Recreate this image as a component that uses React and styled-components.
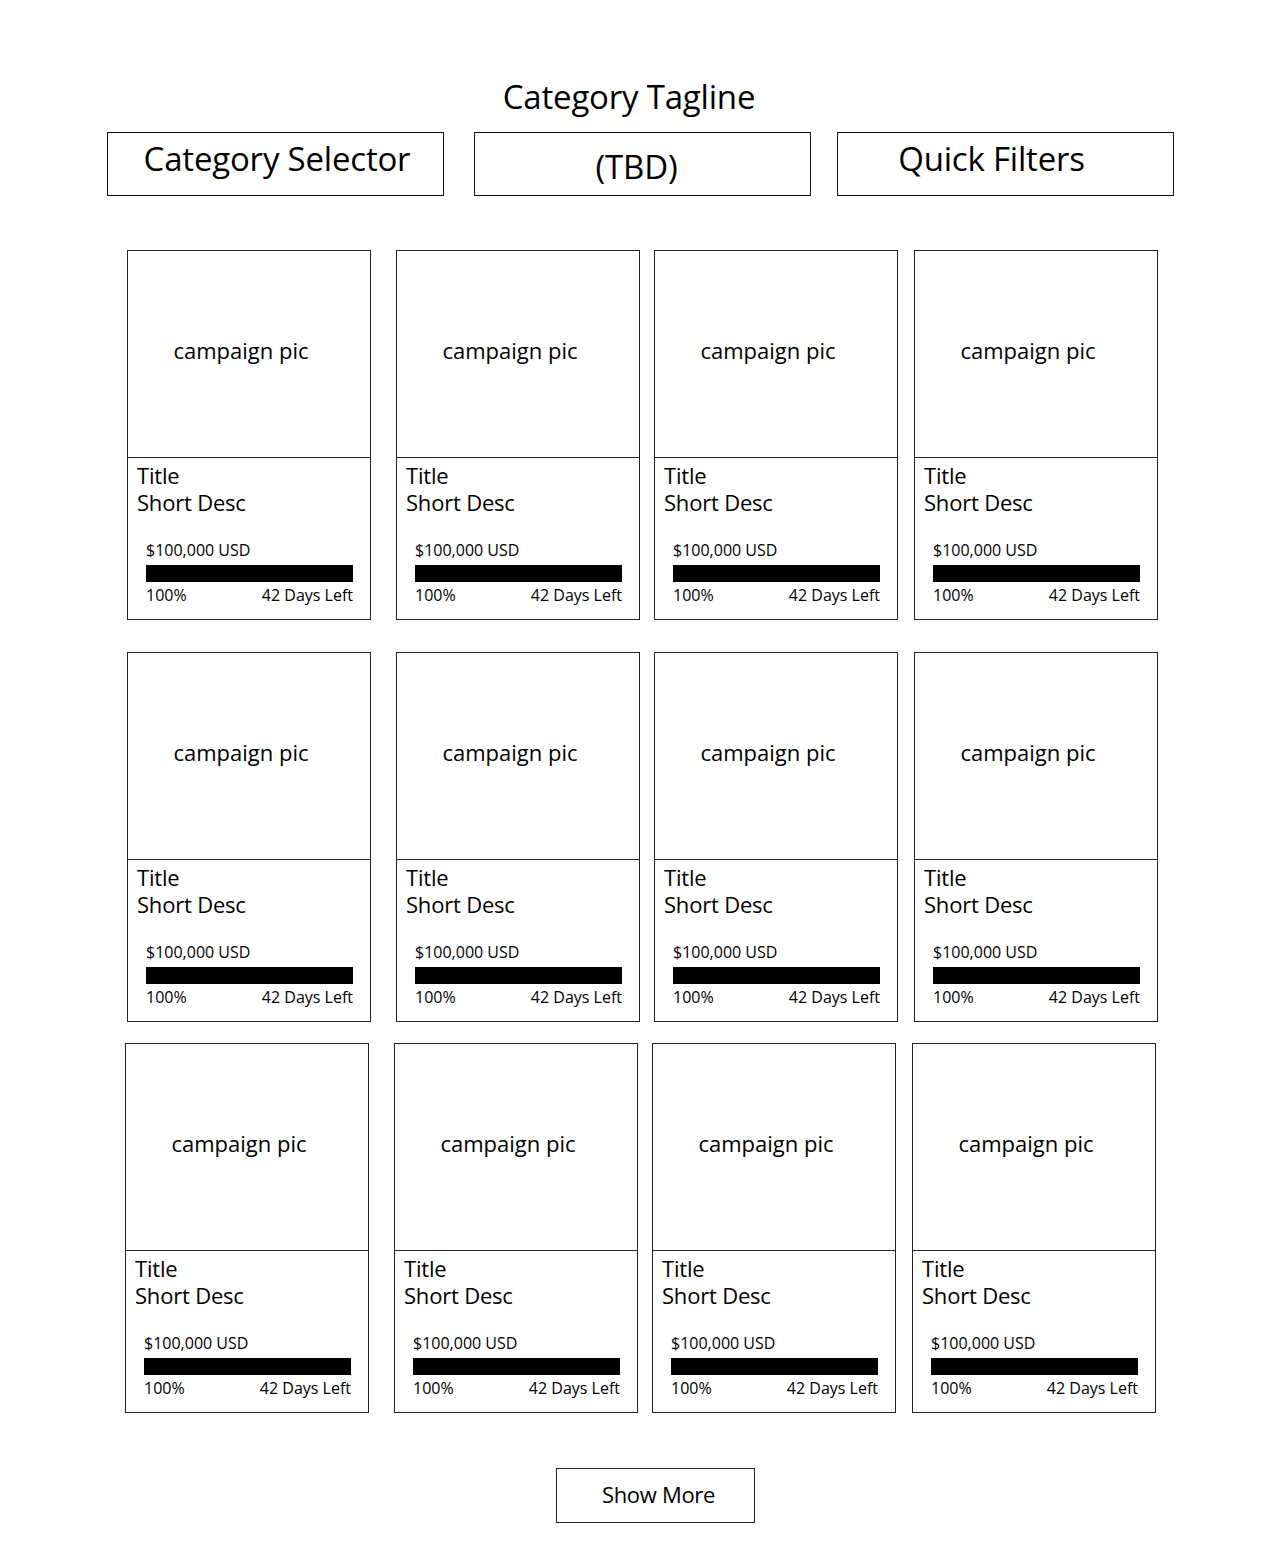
import React from 'react';
import styled, { createGlobalStyle } from 'styled-components';

const GlobalStyle = createGlobalStyle`
    html, body {
        margin: 0;
        padding: 0;
        background: #fff;
    }
    body {
        font-family: "Open Sans", "Liberation Sans", sans-serif;
        color: #000;
    }
`;

const Page = styled.div`
    width: 1280px;
    min-height: 1557px;
    background: #fff;
    overflow: hidden;
`;

const Tagline = styled.h1`
    margin: 0;
    padding-top: 76px;
    width: 1258px;
    text-align: center;
    font-size: 33px;
    line-height: 42px;
    font-weight: 400;
    letter-spacing: -0.2px;
`;

const Filters = styled.div`
    display: flex;
    padding-left: 107px;
    margin-top: 14px;
`;

// $offset > 0 pushes the label right, < 0 pulls it left
const FilterBox = styled.div`
    box-sizing: border-box;
    width: 337px;
    height: 64px;
    margin-left: ${p => p.$gap || 0}px;
    border: 1px solid #111;
    display: flex;
    justify-content: center;
    padding-top: ${p => p.$top}px;
    padding-left: ${p => Math.max(0, p.$offset)}px;
    padding-right: ${p => Math.max(0, -p.$offset)}px;
    font-size: 33px;
    line-height: 40px;
    letter-spacing: -0.2px;
`;

const CardRow = styled.div`
    display: flex;
    padding-left: ${p => p.$left}px;
    margin-top: ${p => p.$top}px;
`;

const Card = styled.div`
    box-sizing: border-box;
    width: 244px;
    height: 370px;
    margin-left: ${p => p.$gap || 0}px;
    border: 1px solid #222;
    display: flex;
    flex-direction: column;
`;

const Pic = styled.div`
    height: 207px;
    border-bottom: 1px solid #222;
    display: flex;
    align-items: center;
    justify-content: center;
    padding-right: 16px;
    padding-bottom: 9px;
    box-sizing: border-box;
    font-size: 22px;
`;

const Info = styled.div`
    padding: 4px 17px 0 9px;
`;

const Line = styled.div`
    font-size: 22px;
    line-height: 27px;
    letter-spacing: -0.2px;
`;

const Stats = styled.div`
    padding-left: 9px;
    margin-top: 24px;
`;

const Amount = styled.div`
    font-size: 16px;
    line-height: 20px;
`;

const Bar = styled.div`
    margin-top: 5px;
    height: 17px;
    background: #000;
`;

const Meta = styled.div`
    margin-top: 3px;
    display: flex;
    justify-content: space-between;
    font-size: 16px;
    line-height: 20px;
`;

const MoreButton = styled.button`
    display: block;
    box-sizing: border-box;
    margin: 55px 0 0 556px;
    width: 199px;
    height: 55px;
    background: #fff;
    border: 1px solid #222;
    padding: 0 0 4px 6px;
    font-family: "Open Sans", "Liberation Sans", sans-serif;
    font-size: 22px;
    letter-spacing: -0.3px;
    color: #000;
`;

const rows = [
    { left: 127, top: 54 },
    { left: 127, top: 32 },
    { left: 125, top: 21 },
];
const gaps = [0, 25, 14, 16];

const CampaignCard = ({ gap }) => (
    <Card $gap={gap}>
        <Pic>campaign pic</Pic>
        <Info>
            <Line>Title</Line>
            <Line>Short Desc</Line>
            <Stats>
                <Amount>$100,000 USD</Amount>
                <Bar />
                <Meta>
                    <span>100%</span>
                    <span>42 Days Left</span>
                </Meta>
            </Stats>
        </Info>
    </Card>
);

const App = () => {
    return <Page>
        <GlobalStyle />
        <Tagline>Category Tagline</Tagline>
        <Filters>
            <FilterBox $top={6} $offset={3}>Category Selector</FilterBox>
            <FilterBox $gap={30} $top={14} $offset={-12}>(TBD)</FilterBox>
            <FilterBox $gap={26} $top={6} $offset={-28}>Quick Filters</FilterBox>
        </Filters>
        {rows.map((row, i) => (
            <CardRow key={i} $left={row.left} $top={row.top}>
                {gaps.map((g, j) => <CampaignCard key={j} gap={g} />)}
            </CardRow>
        ))}
        <MoreButton>Show More</MoreButton>
    </Page>
}

export default App;
